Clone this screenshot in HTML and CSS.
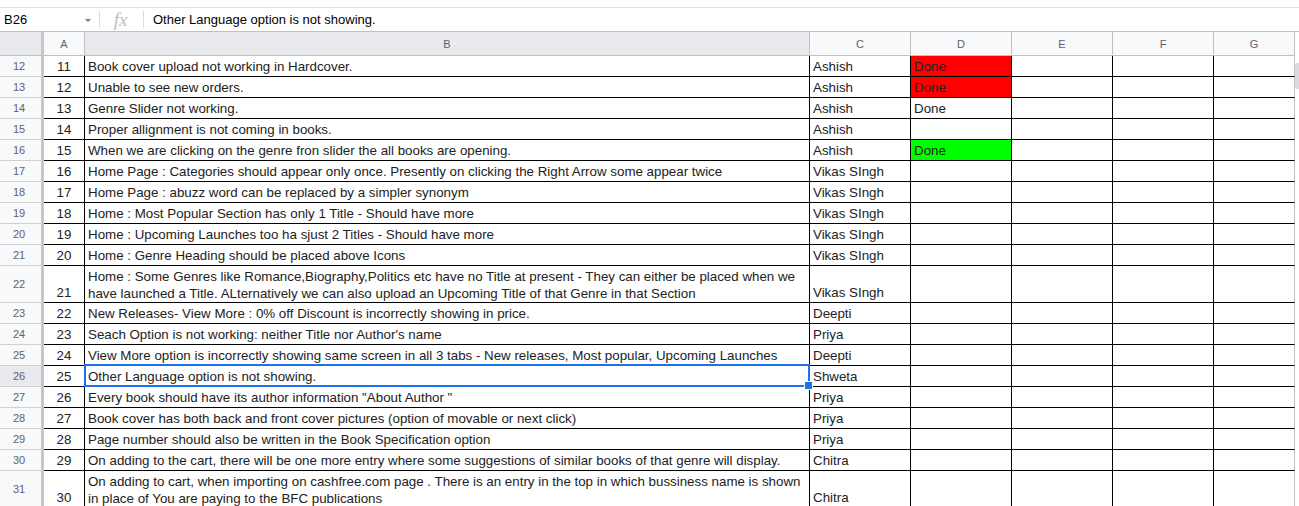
FILE: index.html
```html
<!DOCTYPE html>
<html>
<head>
<meta charset="utf-8">
<link rel="stylesheet" href="styles.css">
</head>
<body>
<div class="top-gap"></div>
<div class="formula-bar">
  <div class="name-box"><span class="name">B26</span><span class="caret"></span></div>
  <div class="sep"></div>
  <div class="fx">fx</div>
  <div class="sep"></div>
  <div class="formula-text">Other Language option is not showing.</div>
</div>
<div class="sheet">
  <div class="grid">
    <div class="row head">
      <div class="rh corner"></div>
      <div class="h ca">A</div>
      <div class="h cb sel">B</div>
      <div class="h cc">C</div>
      <div class="h cd">D</div>
      <div class="h ce">E</div>
      <div class="h cf">F</div>
      <div class="h cg">G</div>
    </div>

    <div class="row"><div class="rh">12</div><div class="c ca">11</div><div class="c cb">Book cover upload not working in Hardcover.</div><div class="c cc">Ashish</div><div class="c cd red">Done</div><div class="c ce"></div><div class="c cf"></div><div class="c cg"></div></div>
    <div class="row"><div class="rh">13</div><div class="c ca">12</div><div class="c cb">Unable to see new orders.</div><div class="c cc">Ashish</div><div class="c cd red">Done</div><div class="c ce"></div><div class="c cf"></div><div class="c cg"></div></div>
    <div class="row"><div class="rh">14</div><div class="c ca">13</div><div class="c cb">Genre Slider not working.</div><div class="c cc">Ashish</div><div class="c cd">Done</div><div class="c ce"></div><div class="c cf"></div><div class="c cg"></div></div>
    <div class="row"><div class="rh">15</div><div class="c ca">14</div><div class="c cb">Proper allignment is not coming in books.</div><div class="c cc">Ashish</div><div class="c cd"></div><div class="c ce"></div><div class="c cf"></div><div class="c cg"></div></div>
    <div class="row"><div class="rh">16</div><div class="c ca">15</div><div class="c cb">When we are clicking on the genre fron slider the all books are opening.</div><div class="c cc">Ashish</div><div class="c cd green">Done</div><div class="c ce"></div><div class="c cf"></div><div class="c cg"></div></div>
    <div class="row"><div class="rh">17</div><div class="c ca">16</div><div class="c cb">Home Page : Categories should appear only once. Presently on clicking the Right Arrow some appear twice</div><div class="c cc">Vikas SIngh</div><div class="c cd"></div><div class="c ce"></div><div class="c cf"></div><div class="c cg"></div></div>
    <div class="row"><div class="rh">18</div><div class="c ca">17</div><div class="c cb">Home Page : abuzz word can be replaced by a simpler synonym</div><div class="c cc">Vikas SIngh</div><div class="c cd"></div><div class="c ce"></div><div class="c cf"></div><div class="c cg"></div></div>
    <div class="row"><div class="rh">19</div><div class="c ca">18</div><div class="c cb">Home : Most Popular Section has only 1 Title - Should have more</div><div class="c cc">Vikas SIngh</div><div class="c cd"></div><div class="c ce"></div><div class="c cf"></div><div class="c cg"></div></div>
    <div class="row"><div class="rh">20</div><div class="c ca">19</div><div class="c cb">Home : Upcoming Launches too ha sjust 2 Titles - Should have more</div><div class="c cc">Vikas SIngh</div><div class="c cd"></div><div class="c ce"></div><div class="c cf"></div><div class="c cg"></div></div>
    <div class="row"><div class="rh">21</div><div class="c ca">20</div><div class="c cb">Home : Genre Heading should be placed above Icons</div><div class="c cc">Vikas SIngh</div><div class="c cd"></div><div class="c ce"></div><div class="c cf"></div><div class="c cg"></div></div>
    <div class="row tall"><div class="rh">22</div><div class="c ca">21</div><div class="c cb">Home : Some Genres like Romance,Biography,Politics etc have no Title at present - They can either be placed when we<br>have launched a Title. ALternatively we can also upload an Upcoming Title of that Genre in that Section</div><div class="c cc">Vikas SIngh</div><div class="c cd"></div><div class="c ce"></div><div class="c cf"></div><div class="c cg"></div></div>
    <div class="row"><div class="rh">23</div><div class="c ca">22</div><div class="c cb">New Releases- View More : 0% off Discount is incorrectly showing in price.</div><div class="c cc">Deepti</div><div class="c cd"></div><div class="c ce"></div><div class="c cf"></div><div class="c cg"></div></div>
    <div class="row"><div class="rh">24</div><div class="c ca">23</div><div class="c cb">Seach Option is not working: neither Title nor Author's name</div><div class="c cc">Priya</div><div class="c cd"></div><div class="c ce"></div><div class="c cf"></div><div class="c cg"></div></div>
    <div class="row"><div class="rh">25</div><div class="c ca">24</div><div class="c cb">View More option is incorrectly showing same screen in all 3 tabs - New releases, Most popular, Upcoming Launches</div><div class="c cc">Deepti</div><div class="c cd"></div><div class="c ce"></div><div class="c cf"></div><div class="c cg"></div></div>
    <div class="row"><div class="rh sel">26</div><div class="c ca">25</div><div class="c cb active">Other Language option is not showing.</div><div class="c cc">Shweta</div><div class="c cd"></div><div class="c ce"></div><div class="c cf"></div><div class="c cg"></div></div>
    <div class="row"><div class="rh">27</div><div class="c ca">26</div><div class="c cb">Every book should have its author information "About Author "</div><div class="c cc">Priya</div><div class="c cd"></div><div class="c ce"></div><div class="c cf"></div><div class="c cg"></div></div>
    <div class="row"><div class="rh">28</div><div class="c ca">27</div><div class="c cb">Book cover has both back and front cover pictures (option of movable or next click)</div><div class="c cc">Priya</div><div class="c cd"></div><div class="c ce"></div><div class="c cf"></div><div class="c cg"></div></div>
    <div class="row"><div class="rh">29</div><div class="c ca">28</div><div class="c cb">Page number should also be written in the Book Specification option</div><div class="c cc">Priya</div><div class="c cd"></div><div class="c ce"></div><div class="c cf"></div><div class="c cg"></div></div>
    <div class="row"><div class="rh">30</div><div class="c ca">29</div><div class="c cb">On adding to the cart, there will be one more entry where some suggestions of similar books of that genre will display.</div><div class="c cc">Chitra</div><div class="c cd"></div><div class="c ce"></div><div class="c cf"></div><div class="c cg"></div></div>
    <div class="row tall"><div class="rh">31</div><div class="c ca">30</div><div class="c cb">On adding to cart, when importing on cashfree.com page . There is an entry in the top in which bussiness name is shown<br>in place of You are paying to the BFC publications</div><div class="c cc">Chitra</div><div class="c cd"></div><div class="c ce"></div><div class="c cf"></div><div class="c cg"></div></div>
  </div>
  <div class="vscroll"><div class="thumb"></div></div>
</div>
</body>
</html>
```

FILE: styles.css
```css
* { box-sizing: border-box; }
html, body { margin: 0; padding: 0; background: #fff; }
body {
  font-family: "Liberation Sans", Arial, sans-serif;
  font-size: 13px;
  color: #000;
  width: 1299px;
  height: 506px;
  overflow: hidden;
}
.top-gap { height: 7px; }
.formula-bar {
  display: flex;
  align-items: center;
  height: 25px;
  border-top: 1px solid #e0e0e0;
  border-bottom: 1px solid #c0c0c0;
}
.name-box {
  width: 99px;
  display: flex;
  align-items: center;
  justify-content: space-between;
  padding-left: 4px;
  padding-right: 8px;
  font-size: 13px;
  color: #000;
}
.caret {
  width: 0;
  height: 0;
  border-left: 3px solid transparent;
  border-right: 3px solid transparent;
  border-top: 3px solid #777;
  margin-top: 2px;
}
.sep { width: 1px; height: 17px; background: #dadce0; }
.fx {
  width: 43px;
  text-align: center;
  font-family: "Liberation Serif", "Times New Roman", serif;
  font-style: italic;
  font-size: 19px;
  color: #bdbdbd;
  line-height: 20px;
  padding-right: 2px;
}
.formula-text { padding-left: 9px; font-size: 13px; }

.sheet { display: flex; }
.grid { width: 1295px; }
.vscroll { width: 4px; padding-top: 31px; }
.thumb { width: 4px; height: 26px; background: #dadce0; border-radius: 3px 0 0 3px; }

.row { display: flex; height: 21px; }
.row.tall { height: 37px; }
.row.head { height: 24px; }

.rh {
  flex: 0 0 44px;
  display: flex;
  align-items: center;
  justify-content: center;
  padding-right: 3px;
  background: #f8f9fa;
  border-right: 3px solid #c6c6c6;
  border-bottom: 1px solid #d0d0d0;
  color: #5f6368;
  font-size: 11px;
}
.rh.sel, .rh.corner { background: #e8eaed; }
.head .rh { border-bottom: 1px solid #c0c0c0; }

.ca { flex: 0 0 41px; }
.cb { flex: 0 0 725px; }
.cc, .cd, .ce, .cf { flex: 0 0 101px; }
.cg { flex: 0 0 81px; }

.h {
  display: flex;
  align-items: center;
  justify-content: center;
  background: #f8f9fa;
  border-right: 1px solid #c0c0c0;
  border-bottom: 1px solid #c0c0c0;
  color: #5f6368;
  font-size: 11px;
}
.h.sel { background: #e8eaed; }

.c {
  display: flex;
  align-items: flex-end;
  padding: 0 3px 1px 3px;
  font-size: 13.333px;
  line-height: 17px;
  color: #222;
  border-right: 1px solid #000;
  border-bottom: 1px solid #000;
  white-space: nowrap;
  overflow: hidden;
}
.c.ca { justify-content: center; padding: 0 0 1px 0; }
.c.cb { display: block; padding-top: 0; }
.row.tall .c.cb { padding-bottom: 0; }
.row .c.cb {
  display: flex;
  flex-direction: column;
  justify-content: flex-end;
  align-items: flex-start;
}
.c.cg { border-right-color: #c0c0c0; }
.red { background: #ff0000; }
.green { background: #00ff00; }

.active { position: relative; overflow: visible; }
.active::after {
  content: "";
  position: absolute;
  left: -1px;
  top: -2px;
  right: -1px;
  bottom: -1px;
  border: 2px solid #1a73e8;
  pointer-events: none;
}
.active::before {
  content: "";
  position: absolute;
  right: -4px;
  bottom: -4px;
  width: 7px;
  height: 7px;
  background: #1a73e8;
  border: 1px solid #fff;
  z-index: 2;
}
```
